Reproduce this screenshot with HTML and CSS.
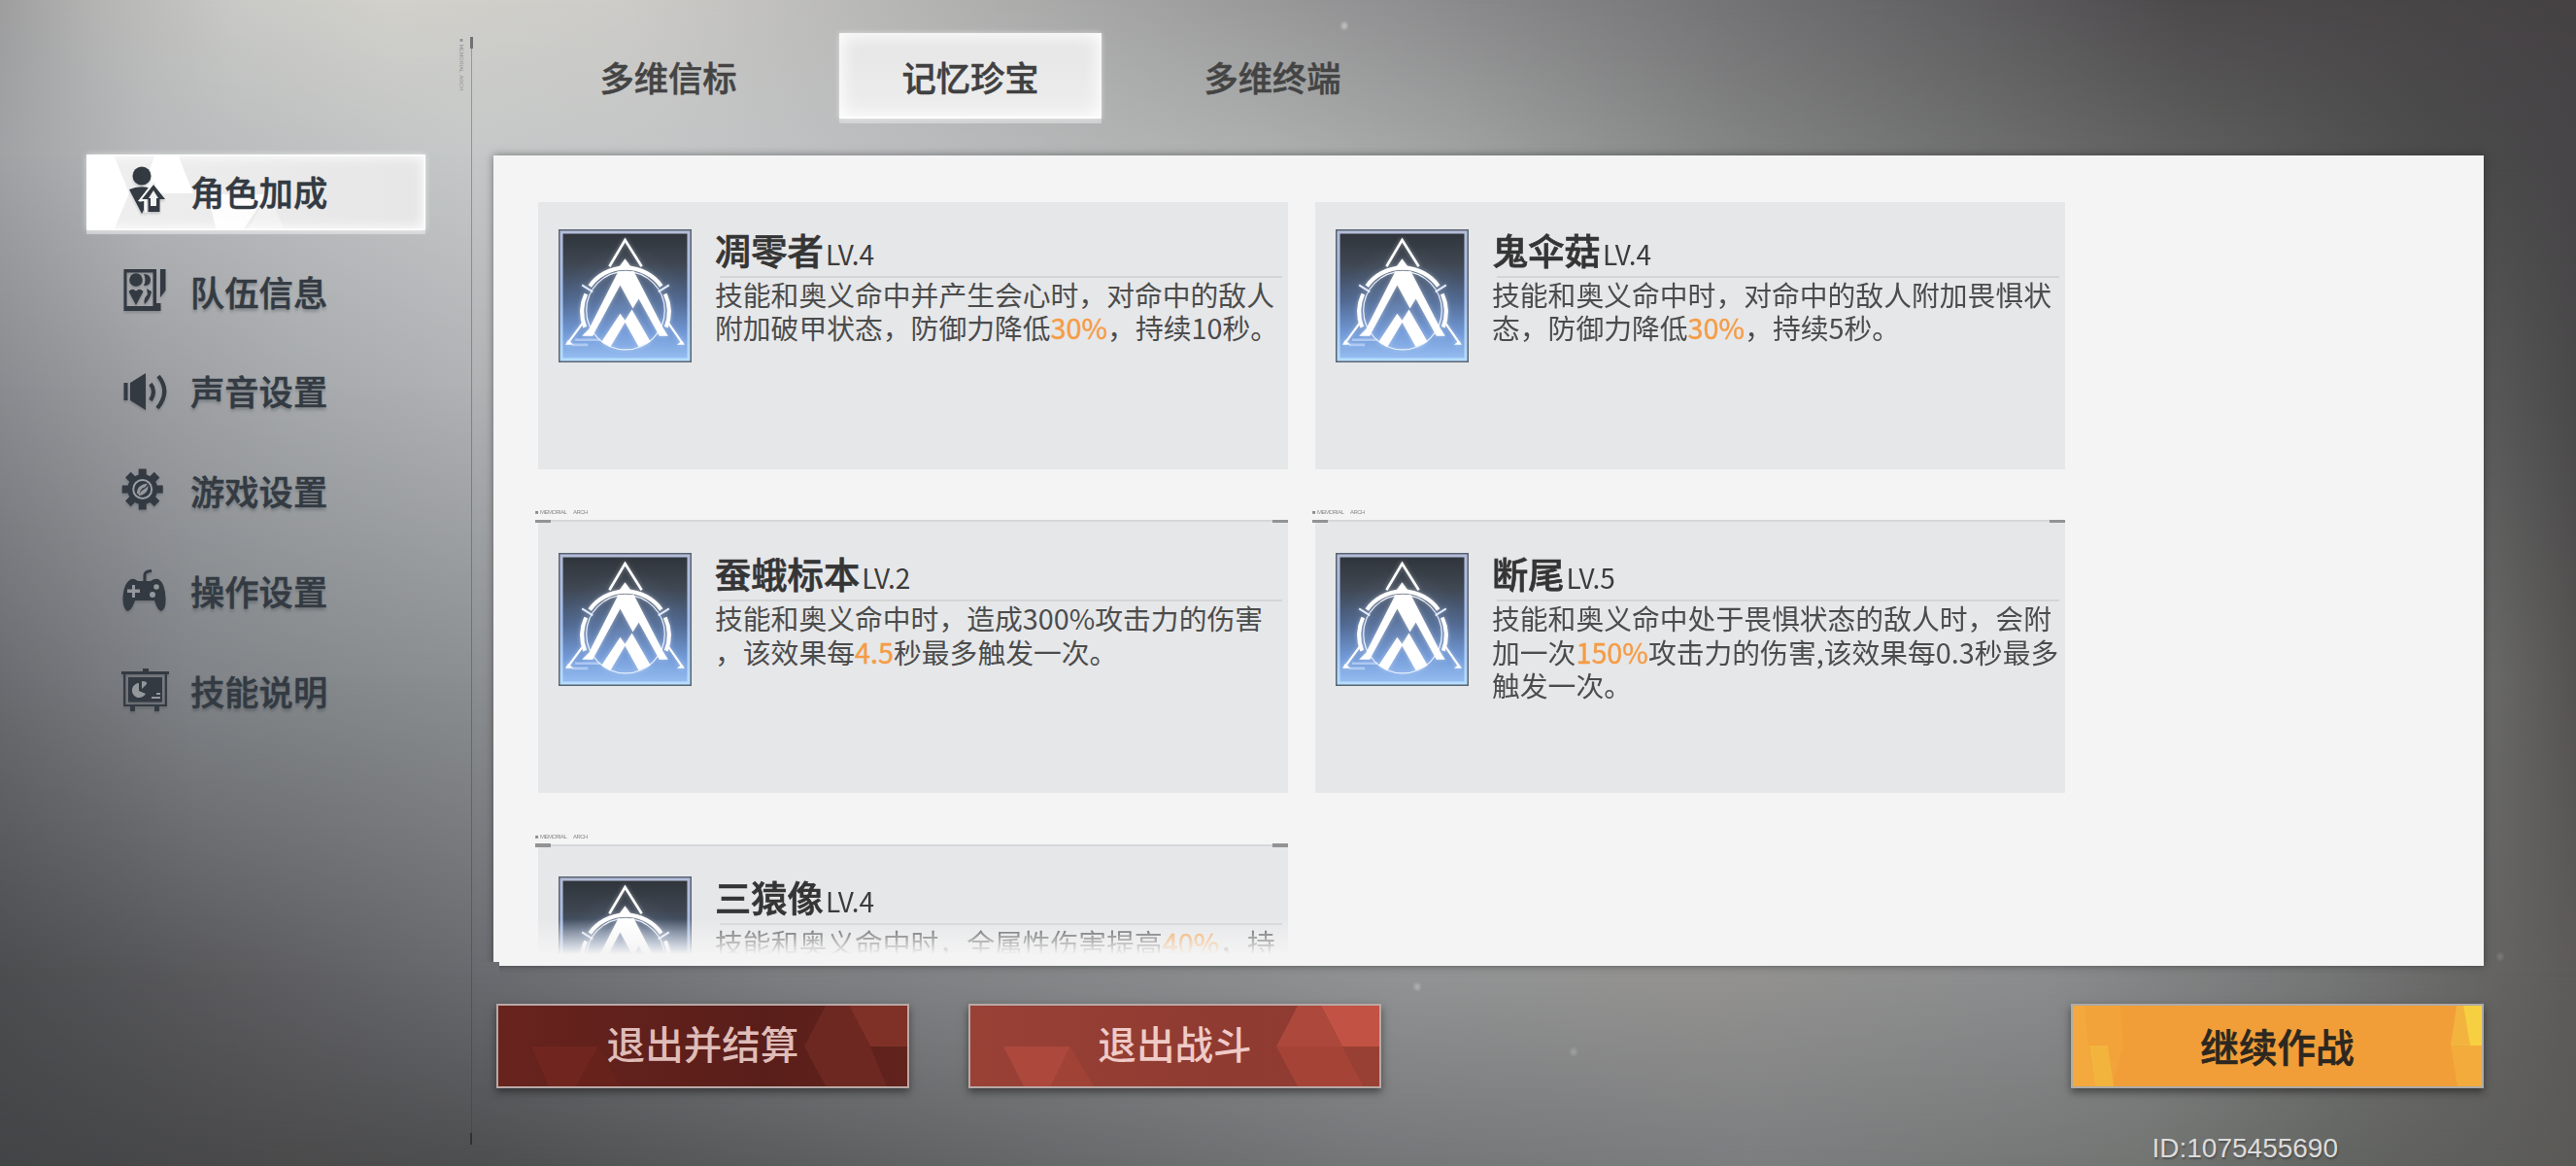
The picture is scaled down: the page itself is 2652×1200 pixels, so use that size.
FILE: index.html
```html
<!DOCTYPE html>
<html lang="zh-CN">
<head>
<meta charset="utf-8">
<title>记忆珍宝</title>
<link rel="stylesheet" href="styles.css">
</head>
<body>
<svg class="defs" width="0" height="0" aria-hidden="true">
  <defs>
    <linearGradient id="sky" x1="0" y1="0" x2="0" y2="1">
      <stop offset="0" stop-color="#30353b"/>
      <stop offset=".25" stop-color="#3f4752"/>
      <stop offset=".55" stop-color="#516a93"/>
      <stop offset=".8" stop-color="#7199d6"/>
      <stop offset="1" stop-color="#94bcf0"/>
    </linearGradient>
    <linearGradient id="rim" x1="0" y1="0" x2="0" y2="1">
      <stop offset="0" stop-color="#b4bcd8"/>
      <stop offset=".5" stop-color="#a3bcea"/>
      <stop offset="1" stop-color="#b6deff"/>
    </linearGradient>
    <radialGradient id="halo">
      <stop offset="0" stop-color="#a9c8ff" stop-opacity=".2"/>
      <stop offset="1" stop-color="#a9c8ff" stop-opacity="0"/>
    </radialGradient>
    <filter id="glow" x="-20%" y="-20%" width="140%" height="140%">
      <feGaussianBlur stdDeviation="2"/>
    </filter>
    <g id="emblem-lines">
      <path d="M52 38 68 11 85 38" fill="none" stroke="#fff" stroke-width="2.6"/>
      <path d="M60 41 68 30 76 41Z" fill="#fff"/>
      <path d="M32 58A45 45 0 0 1 105 58" fill="none" stroke="#fff" stroke-width="4.2"/>
      <path d="M28 66A44 44 0 0 0 27 100M109 66A44 44 0 0 1 110 100" fill="none" stroke="#fff" stroke-width="4"/>
      <circle cx="68.5" cy="83" r="40" fill="none" stroke="#e9f1ff" stroke-width="1.2"/>
      <path d="M24 57 35 64M113 57 102 64" stroke="#e3ecff" stroke-width="2"/>
      <path d="M61 43H77L107 101 112 109H103L82 71 76 81 63 57 37 105 35 109H24L31 102Z" fill="#fff"/>
      <path d="M63 86 68 93 75 82 94 115 82 120 68 95 53 120 44 115Z" fill="#fff"/>
      <path d="M26 94 9 117M111 94 127 117" stroke="#fff" stroke-width="2.2"/>
      <path d="M7 118 10 113 15 118ZM129 118 126 114 121 118Z" fill="#fff"/>
    </g>
    <symbol id="emblem" viewBox="0 0 136 136">
      <rect width="136" height="136" fill="#596471"/>
      <rect x="1.5" y="1.5" width="133" height="133" fill="url(#rim)"/>
      <rect x="4.5" y="4.5" width="127" height="127" fill="url(#sky)"/>
      <circle cx="68" cy="78" r="62" fill="url(#halo)"/>
      <path d="M17 113H43M14 118H30" stroke="#cfe0ff" stroke-width="2.5" opacity=".6"/>
      <use href="#emblem-lines" filter="url(#glow)" opacity=".4"/>
      <use href="#emblem-lines"/>
    </symbol>
  </defs>
</svg>

<div class="backdrop">
  <i class="band band-0"></i><i class="band band-1"></i><i class="band band-2"></i>
  <i class="band band-3"></i><i class="band band-4"></i><i class="band band-5"></i>
  <i class="mote mote-a"></i><i class="mote mote-b"></i><i class="mote mote-c"></i><i class="mote mote-d"></i>
</div>

<div class="screen">
  <aside class="sidebar">
    <nav class="menu">
      <a class="item active">
        <svg class="facets" viewBox="0 0 349 78"><path d="M0 0H28L44 40 28 78H0ZM71 0H94L110 40H55Z" fill="#fff"/><path d="M124 41H186L161 78H134Z" fill="#fff" opacity=".9"/><path d="M188 41 165 78H204Z" fill="#fff" opacity=".35"/></svg>
        <svg class="icon" viewBox="0 0 48 48"><circle cx="20" cy="7" r="9.500"/><path d="M7 21Q16 17 27 19L17 34 22 33V42L20 46Z"/><path d="M32 16 44 31H38.500V44H26.500V31H20Z"/><path class="gap" d="M32 22 37 30H35V38H29V30H27Z"/><path d="M33 13 18 32H24V45" fill="none" stroke="#f5f5f5" stroke-width="2"/></svg>
        <span>角色加成</span>
      </a>
      <a class="item">
        <svg class="icon" viewBox="0 0 48 48"><path fill-rule="evenodd" d="M1.500 0H35V35H39.500V43H1.500ZM4.500 3.500V38H31.500V3.500Z"/><path d="M39 0H44.500V22L39 29Z"/><circle cx="14" cy="11" r="6.800"/><path d="M6.500 23Q10 19 14 22.500 18 19 21.500 23L14 37ZM22 5Q29 5 29 11 29 17 22 17 25 11 22 5ZM25 20 30 23Q29 30 23 36 21 31 26 26Z"/></svg>
        <span>队伍信息</span>
      </a>
      <a class="item">
        <svg class="icon" viewBox="0 0 48 48"><path d="M1.500 14H5.500V32H1.500ZM8 14 24 4V42L8 32Z"/><path d="M29 15Q35 23 29 32M37 7Q50 23 36 40" fill="none" stroke="#333a42" stroke-width="4.200"/></svg>
        <span>声音设置</span>
      </a>
      <a class="item">
        <svg class="icon" viewBox="0 0 48 48"><g transform="translate(20.700 21.500)"><circle r="15.500"/><path d="M-4-21H4V21H-4ZM-21-4H21V4H-21Z"/><path transform="rotate(45)" d="M-4-21H4V21H-4ZM-21-4H21V4H-21Z"/><circle r="9.500" fill="none" stroke="#9b9ea2" stroke-width="2"/><path class="hole" d="M-6 4Q-5-5 5-6 4-2 0-1-3 1-3 6ZM6-4Q6 5-4 7-2 2 0 1 4-1 6-4Z"/></g></svg>
        <span>游戏设置</span>
      </a>
      <a class="item">
        <svg class="icon" viewBox="0 0 48 48"><path d="M9 11Q12 10 16 13H29Q33 10 37 11 44 15 44.500 31 45 42 40 44 36 43 33 33H13Q10 43 5 44 .5 41 .5 31 1 15 9 11Z"/><path d="M23 13V7Q23 3 30 2.500" fill="none" stroke="#333a42" stroke-width="3"/><path class="hole" d="M10 17H13V21.500H18V25H13V30H10V25H5V21.500H10Z"/><circle class="hole" cx="35" cy="19" r="2.800"/><circle class="hole" cx="31" cy="27" r="3"/></svg>
        <span>操作设置</span>
      </a>
      <a class="item">
        <svg class="icon" viewBox="0 0 48 48"><path d="M-1 3H48V6H-1ZM21 0H27V4H21ZM8 39H13V44H8ZM33 39H38V44H33Z"/><path d="M2.200 6V38H44.800V6" fill="none" stroke="#333a42" stroke-width="2.200"/><path d="M6 9H41V34.500H6Z"/><path class="hole" d="M17 15V23L24 26A7.500 7.500 0 1 1 17 15ZM20 13Q26 13 25 16L20 21ZM30 29H39V31H30ZM35 25H39V27H35Z"/></svg>
        <span>技能说明</span>
      </a>
    </nav>
    <div class="divider"><small>■ MEMORIAL&nbsp; ARCH</small></div>
  </aside>

  <main class="main">
    <nav class="tabs">
      <a class="tab">多维信标</a>
      <a class="tab active">记忆珍宝</a>
      <a class="tab">多维终端</a>
    </nav>

    <section class="panel">
      <div class="viewport">
        <div class="cards">
          <article class="card">
            <svg class="avatar"><use href="#emblem"/></svg>
            <div class="info">
              <h2>凋零者<em>LV.4</em></h2>
              <p>技能和奥义命中并产生会心时，对命中的敌人<br>附加破甲状态，防御力降低<mark>30%</mark>，持续10秒。</p>
            </div>
          </article>
          <article class="card">
            <svg class="avatar"><use href="#emblem"/></svg>
            <div class="info">
              <h2>鬼伞菇<em>LV.4</em></h2>
              <p>技能和奥义命中时，对命中的敌人附加畏惧状<br>态，防御力降低<mark>30%</mark>，持续5秒。</p>
            </div>
          </article>
          <article class="card">
            <small class="tag">■ <b>MEMORIAL</b> ARCH</small>
            <svg class="avatar"><use href="#emblem"/></svg>
            <div class="info">
              <h2>蚕蛾标本<em>LV.2</em></h2>
              <p>技能和奥义命中时，造成300%攻击力的伤害<br>，该效果每<mark>4.5</mark>秒最多触发一次。</p>
            </div>
          </article>
          <article class="card">
            <small class="tag">■ <b>MEMORIAL</b> ARCH</small>
            <svg class="avatar"><use href="#emblem"/></svg>
            <div class="info">
              <h2>断尾<em>LV.5</em></h2>
              <p>技能和奥义命中处于畏惧状态的敌人时，会附<br>加一次<mark>150%</mark>攻击力的伤害,该效果每0.3秒最多<br>触发一次。</p>
            </div>
          </article>
          <article class="card">
            <small class="tag">■ <b>MEMORIAL</b> ARCH</small>
            <svg class="avatar"><use href="#emblem"/></svg>
            <div class="info">
              <h2>三猿像<em>LV.4</em></h2>
              <p>技能和奥义命中时，全属性伤害提高<mark>40%</mark>，持</p>
            </div>
          </article>
        </div>
      </div>
    </section>

    <footer class="actions">
      <button class="btn settle">
        <svg class="facets" viewBox="0 0 421 83" preserveAspectRatio="none"><path d="M361 0H421V42H383Z" fill="#7f3128"/><path d="M337 0H361L383 42H315Z" fill="#6e2822"/><path d="M315 42H383L400 83H337Z" fill="#6c2821"/><path d="M34 42H103L80 83H52Z" fill="#70261f"/><path d="M103 42 125 83H80Z" fill="#68221c"/></svg>
        <span>退出并结算</span>
      </button>
      <button class="btn quit">
        <svg class="facets" viewBox="0 0 421 83" preserveAspectRatio="none"><path d="M361 0H421V42H383Z" fill="#c25344"/><path d="M337 0H361L383 42H315Z" fill="#ac493c"/><path d="M315 42H383L405 83H337Z" fill="#a54337"/><path d="M383 42H421V83H405Z" fill="#984034"/><path d="M34 42H103L83 83H55Z" fill="#ac483c"/><path d="M103 42 127 83H83Z" fill="#a04236"/></svg>
        <span>退出战斗</span>
      </button>
      <button class="btn resume">
        <svg class="facets" viewBox="0 0 421 83" preserveAspectRatio="none"><path d="M0 0H49L52 42 40 83H0Z" fill="#f4ab3c" opacity=".4"/><path d="M0 0H12L16 42 23 83H0Z" fill="#f3a93e"/><path d="M17 41H36L42 83H23Z" fill="#f2b43c"/><path d="M395 0H402L409 41H389Z" fill="#f2b43e"/><path d="M402 0H421V41H409Z" fill="#f6d040"/><path d="M389 41H421V83H396Z" fill="#f3ab3c"/></svg>
        <span>继续作战</span>
      </button>
    </footer>
    <div class="uid">ID:1075455690</div>
  </main>
</div>
</body>
</html>
```

FILE: styles.css
```css
* { box-sizing: border-box; }

body {
  margin: 0;
  width: 2652px;
  height: 1200px;
  overflow: hidden;
  position: relative;
  background: #7a7b7d;
  font-family: "Noto Sans CJK SC", "Noto Sans", sans-serif;
  color: #333a42;
}

.defs { position: absolute; }

/* Backdrop: horizontal gradients, each fading into the next down the page */
.backdrop { position: absolute; inset: 0; overflow: hidden; }
.band { position: absolute; inset: 0; }
.band-0 {
  background: linear-gradient(90deg, #9e9e9f 0, #b5b5b4 100px, #c9cac6 240px, #d2d1cb 400px, #cdccc8 640px, #b0b0af 1000px, #8f8e90 1450px, #626163 2000px, #4d4a4c 2250px, #454244 2652px);
}
.band-1 {
  background: linear-gradient(90deg, #a0a2a4 0, #b6b8ba 150px, #c5c8c8 480px, #c3c5c6 700px, #bcbdbf 900px, #adb0af 1300px, #a0a3a2 1500px, #828383 1800px, #626362 2200px, #4c4c4c 2500px, #474547 2652px);
  mask-image: linear-gradient(180deg, transparent 0, #000 160px);
}
.band-2 {
  background: linear-gradient(90deg, #8a8b90 0, #9b9da1 150px, #a6a9ac 300px, #b0b2b4 500px, #585858 2560px, #4a494a 2652px);
  mask-image: linear-gradient(180deg, transparent 160px, #000 400px);
}
.band-3 {
  background: linear-gradient(90deg, #6b6c71 0, #808488 200px, #8b8f91 500px, #6a6a69 2560px, #555352 2652px);
  mask-image: linear-gradient(180deg, transparent 400px, #000 700px);
}
.band-4 {
  background: linear-gradient(90deg, #4c4d4f 0, #5c5c5f 250px, #6a6b70 500px, #7c7e81 800px, #8c8e8f 1300px, #929495 1450px, #949391 1750px, #8c8d8f 2100px, #757676 2400px, #5d5b5a 2652px);
  mask-image: linear-gradient(180deg, transparent 700px, #000 1000px);
}
.band-5 {
  background: linear-gradient(90deg, #434446 0, #4a4a4b 300px, #4d4e4f 500px, #5e6061 900px, #747577 1400px, #7c7d7f 1800px, #737573 2200px, #636562 2400px, #5a5956 2652px);
  mask-image: linear-gradient(180deg, transparent 1000px, #000 1200px);
}
.mote {
  position: absolute;
  width: 10px;
  height: 11px;
  border-radius: 50%;
  background: radial-gradient(closest-side, rgba(255, 255, 255, .45), rgba(255, 255, 255, 0));
}
.mote-a { left: 1379px; top: 21px; }
.mote-b { left: 1454px; top: 1010px; opacity: .7; }
.mote-c { left: 1615px; top: 1077px; opacity: .5; }
.mote-d { left: 2569px; top: 979px; opacity: .35; }

.screen {
  position: relative;
  display: grid;
  grid-template-columns: 508px 2049px;
  height: 1200px;
}

/* Sidebar */
.sidebar { display: flex; justify-content: space-between; }
.menu {
  display: flex;
  flex-direction: column;
  gap: 24.8px;
  padding: 159px 0 0 89px;
}
.item {
  position: relative;
  display: flex;
  align-items: center;
  width: 349px;
  height: 78px;
  padding-left: 37px;
  font-size: 35.3px;
  font-weight: 500;
  line-height: 1;
  -webkit-text-stroke: .5px currentColor;
}
.item span {
  position: relative;
  top: -1.5px;
  margin-left: 22px;
  text-shadow: 0 3px 3px rgba(40, 45, 55, .28);
}
.icon {
  position: relative;
  width: 48px;
  height: 48px;
  overflow: visible;
  fill: #333a42;
  filter: drop-shadow(0 2px 1px rgba(40, 45, 55, .22));
}
.icon .gap { fill: #f3f3f3; }
.icon .hole { fill: #94979b; }
.facets { position: absolute; left: 0; top: 0; width: 100%; height: 100%; }
.item.active {
  background: linear-gradient(90deg, #efefef, #e6e6e7);
  box-shadow: inset 0 0 14px 2px #fff, inset 0 0 0 1.5px #fff, 0 0 6px rgba(255, 255, 255, .6), 0 4px 0 rgba(232, 232, 234, .55);
}
.item.active span { text-shadow: none; }

.divider {
  position: relative;
  width: 3px;
  height: 1140px;
  margin: 38px 21px 0 0;
  background:
    linear-gradient(#707172, #707172) 0 0 / 3px 12px no-repeat,
    linear-gradient(#2f3031, #2f3031) 0 100% / 2px 12px no-repeat,
    linear-gradient(180deg, rgba(90, 92, 94, .45), rgba(60, 62, 64, .5)) 1px 0 / 1px 100% no-repeat;
}
.divider small {
  position: absolute;
  right: 9px;
  top: 0;
  writing-mode: vertical-rl;
  font: 5.5px/7px "Liberation Sans", sans-serif;
  color: rgba(80, 82, 84, .5);
  white-space: nowrap;
}

/* Main column */
.main { display: flex; flex-direction: column; }
.tabs {
  display: flex;
  height: 160px;
  padding: 34px 0 0 45px;
  gap: 41px;
}
.tab {
  display: flex;
  align-items: center;
  justify-content: center;
  width: 270px;
  height: 88px;
  padding-top: 1px;
  font-size: 35.3px;
  font-weight: 500;
  line-height: 1;
  color: #444;
  -webkit-text-stroke: .5px currentColor;
}
.tab.active {
  color: #404040;
  background: linear-gradient(180deg, #e5e5e5, #eee);
  box-shadow: inset 0 0 18px 3px #fff, inset 0 -2px 0 #fff, 0 0 5px rgba(255, 255, 255, .55), 0 5px 0 rgba(225, 225, 227, .6);
}

.panel {
  height: 834px;
  padding-top: 48px;
  background: #f4f4f4;
  clip-path: polygon(-12px -12px, 2061px -12px, 2061px 846px, 6px 846px, 6px 830px, -12px 830px);
  box-shadow: 0 0 8px rgba(30, 30, 32, .5);
}
.viewport {
  height: 776px;
  padding-left: 46px;
  overflow: hidden;
  mask-image: linear-gradient(180deg, #000 738px, transparent 774px);
}
.cards {
  display: grid;
  grid-template-columns: 772px 772px;
  column-gap: 28px;
  row-gap: 52.7px;
  grid-auto-rows: 280.7px;
  margin-top: -6px;
}
.card {
  position: relative;
  display: flex;
  align-items: flex-start;
  padding: 33.5px 0 0 21px;
  background:
    linear-gradient(#d5d7d8, #d5d7d8) 0 0 / 100% 2px no-repeat,
    #e6e7e9;
}
.card::before,
.card::after {
  content: "";
  position: absolute;
  top: -.5px;
  width: 16px;
  height: 3.5px;
  background: #929394;
}
.card::before { left: -3px; }
.card::after { right: 0; }
.tag {
  position: absolute;
  left: -3px;
  top: -12px;
  font: 6px/8px "Liberation Sans", sans-serif;
  letter-spacing: -.6px;
  color: #8a8a8a;
  white-space: nowrap;
}
.tag b { margin: 0 6px 0 1px; font-weight: 400; }
.avatar { flex: none; width: 137px; height: 137px; }
.info { margin-left: 24px; width: 590px; }
.info h2 {
  display: flex;
  align-items: baseline;
  height: 50px;
  margin: 0;
  font-size: 37.3px;
  line-height: 43px;
  font-weight: 500;
  color: #353535;
  -webkit-text-stroke: .7px currentColor;
  background: linear-gradient(#d3d5d7, #d3d5d7) 5px 100% / 579px 2px no-repeat;
}
.info h2 em {
  margin-left: 2px;
  font-size: 28px;
  font-style: normal;
  font-weight: 400;
  color: #3c3c3c;
  -webkit-text-stroke: 0;
}
.info p {
  margin: .5px 0 0;
  font-size: 28.8px;
  line-height: 34.4px;
  color: #4c4c4c;
  white-space: nowrap;
}
.info mark { background: none; color: #f59c45; -webkit-text-stroke: .4px currentColor; }

/* Actions */
.actions {
  display: flex;
  align-items: flex-start;
  gap: 61px;
  padding: 39px 0 0 3px;
}
.btn {
  position: relative;
  width: 425px;
  height: 87px;
  padding: 0;
  border: 2px solid #b9a9a7;
  font: 500 39.6px/1 "Noto Sans CJK SC", sans-serif;
  box-shadow: 0 4px 8px rgba(20, 20, 22, .55);
}
.btn span { position: relative; top: -4px; }
.settle { background: linear-gradient(90deg, #68231d, #5a1e1a 65%, #62231d); color: #dfbcb8; }
.quit { background: linear-gradient(90deg, #9a4136, #8f3b31 60%, #913c32); color: #efcac7; }
.resume {
  margin-left: auto;
  background: #f19e38;
  border-color: #aeaba6;
  color: #2c2720;
  -webkit-text-stroke: .7px currentColor;
}
.resume span { top: -1px; }
.uid {
  align-self: flex-end;
  margin: 46px 150px 0 0;
  font: 28px/32px "Liberation Sans", Arial, sans-serif;
  color: #dcdcdc;
  text-shadow: 1px 2px 2px rgba(0, 0, 0, .3);
}
```
